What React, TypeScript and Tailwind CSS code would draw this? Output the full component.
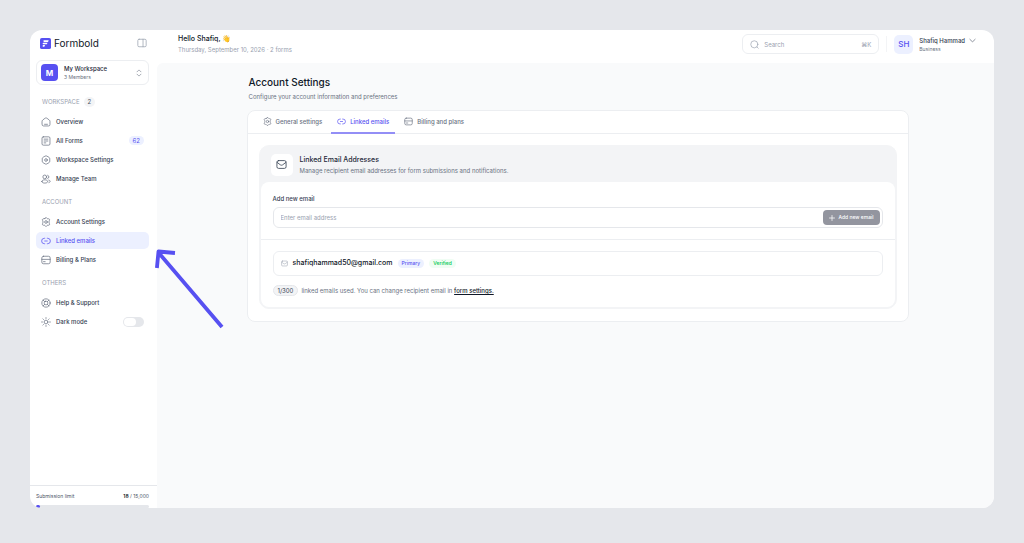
import React from "react";

type IconProps = { className?: string };

function Icon({ className = "size-[10px]", children }: { className?: string; children: React.ReactNode }) {
  return (
    <svg
      viewBox="0 0 24 24"
      fill="none"
      stroke="currentColor"
      strokeWidth="1.8"
      strokeLinecap="round"
      strokeLinejoin="round"
      className={`shrink-0 ${className}`}
      aria-hidden="true"
    >
      {children}
    </svg>
  );
}

const HomeIcon = ({ className }: IconProps) => (
  <Icon className={className}>
    <path d="M2.500 10.500c0-1.300.6-2.300 1.600-3.100l5.300-4.200c1.600-1.200 3.600-1.200 5.200 0l5.300 4.200c1 .8 1.600 1.800 1.600 3.100V18a3.500 3.500 0 0 1-3.500 3.500H6A3.500 3.500 0 0 1 2.500 18z" />
    <path d="M8.500 17.500h7" />
  </Icon>
);

const FormIcon = ({ className }: IconProps) => (
  <Icon className={className}>
    <rect x="2.500" y="2" width="19" height="20" rx="3" />
    <path d="M7.500 7.500h9M7.500 12h9M7.500 16.500h4" />
  </Icon>
);

const HexIcon = ({ className }: IconProps) => (
  <Icon className={className}>
    <path d="M10.200 2.500a3.600 3.600 0 0 1 3.600 0l5.400 3.100A3.600 3.600 0 0 1 21 8.700v6.600a3.600 3.600 0 0 1-1.800 3.100l-5.400 3.100a3.600 3.600 0 0 1-3.600 0l-5.400-3.100A3.600 3.600 0 0 1 3 15.300V8.700a3.600 3.600 0 0 1 1.800-3.100z" />
    <circle cx="12" cy="12" r="3.200" />
  </Icon>
);

const TeamIcon = ({ className }: IconProps) => (
  <Icon className={className}>
    <circle cx="9" cy="7" r="4.500" />
    <path d="M16 3a4.200 4.200 0 0 1 0 8M2 18c0-2.500 3-4 7-4s7 1.500 7 4-3 3.800-7 3.800S2 20.500 2 18zM18.500 14.500c2 .5 3.500 1.600 3.500 3.200 0 1.400-1.200 2.500-3 3" />
  </Icon>
);

const GearIcon = ({ className }: IconProps) => (
  <Icon className={className}>
    <path d="M9.700 3.100C10.300 2 11 1.500 12 1.500s1.700.5 2.300 1.600c.5.900 1.500 1.400 2.500 1.200l1-.1c1.100-.1 2 .3 2.600 1.300s.5 2-.2 2.900l-.6.800c-.6 1.700-.6 3.900 0 5.600l.6.800c.7.900.7 1.900.2 2.900s-1.500 1.400-2.600 1.300l-1-.1c-1-.2-2 .3-2.500 1.200-.6 1.100-1.300 1.600-2.300 1.600s-1.700-.5-2.300-1.600c-.5-.9-1.500-1.400-2.500-1.200l-1 .1c-1.100.1-2-.3-2.600-1.300s-.5-2 .2-2.900l.6-.8c.6-1.700.6-3.900 0-5.600l-.6-.8c-.7-.9-.7-1.900-.2-2.900s1.500-1.400 2.600-1.300l1 .1c1 .2 2-.3 2.500-1.200z" />
    <circle cx="12" cy="12" r="3.200" />
  </Icon>
);

const LinkIcon = ({ className }: IconProps) => (
  <Icon className={className}>
    <path d="M9 18.500H8a6.500 6.500 0 0 1 0-13h1M15 5.500h1a6.500 6.500 0 0 1 0 13h-1M9 12h6" />
  </Icon>
);

const CardIcon = ({ className }: IconProps) => (
  <Icon className={className}>
    <rect x="2" y="3" width="20" height="18" rx="4" />
    <path d="M2 10.500h20M6 16h4" />
  </Icon>
);

const HelpIcon = ({ className }: IconProps) => (
  <Icon className={className}>
    <circle cx="12" cy="12" r="10" />
    <rect x="8" y="8" width="8" height="8" rx="2.500" />
    <path d="M5 5l3.700 3.700M19 5l-3.700 3.700M5 19l3.700-3.700M19 19l-3.700-3.700" />
  </Icon>
);

const SunIcon = ({ className }: IconProps) => (
  <Icon className={className}>
    <circle cx="12" cy="12" r="4.500" />
    <path d="M12 1.500v2M12 20.500v2M1.500 12h2M20.500 12h2M4.600 4.600L6 6M18 18l1.400 1.400M4.600 19.400L6 18M18 6l1.400-1.400" />
  </Icon>
);

const MailIcon = ({ className }: IconProps) => (
  <Icon className={className}>
    <rect x="2" y="3.500" width="20" height="17" rx="3.500" />
    <path d="M2.500 7.500l7 5.200c1.500 1.100 3.500 1.100 5 0l7-5.200" />
  </Icon>
);

type Item = { label: string; icon: (p: IconProps) => React.ReactElement; active?: boolean; badge?: string };

function NavGroup({ title, count, items }: { title: string; count?: string; items: Item[] }) {
  return (
    <section>
      <h2 className="flex h-[11px] items-center gap-1 px-[6px] text-[6px] text-gray-400">
        {title}
        {count && (
          <span className="flex h-[10px] items-center rounded-full bg-gray-100 px-1 text-[6px] text-gray-600">{count}</span>
        )}
      </h2>
      <ul className="mt-[6px] flex flex-col gap-[2px]">
        {items.map(({ label, icon: I, active, badge }) => (
          <li key={label}>
            <a
              href="#"
              className={`flex h-[17px] items-center gap-[5px] rounded-[5px] px-[5px] text-[6px] font-medium ${
                active ? "bg-[#ecf0ff] text-[#5750f1]" : "text-gray-700"
              }`}
            >
              <I className={active ? "size-[10px]" : "size-[10px] text-gray-500"} />
              <span>{label}</span>
              {badge && (
                <span className="ml-auto rounded-full bg-[#ecf0ff] px-1 text-[6px] leading-[9px] font-normal text-[#5750f1]">{badge}</span>
              )}
            </a>
          </li>
        ))}
      </ul>
    </section>
  );
}

function Sidebar() {
  return (
    <aside className="flex w-[127px] shrink-0 flex-col justify-between">
      <div className="pt-[6px] pr-2 pl-[6px]">
        <div className="flex h-[14px] items-center justify-between pr-[2px] pl-1">
          <a href="#" className="flex items-center gap-[3px] text-[10px] leading-none text-gray-900">
            <svg viewBox="0 0 24 24" className="size-[11px]" aria-hidden="true">
              <rect width="24" height="24" rx="4" fill="#5750f1" />
              <path d="M8.500 5H19l-1.500 3.500H8.500A2 2 0 0 1 8.500 5zM7.500 10.300h9L15 13.800H7.500a1.750 1.750 0 0 1 0-3.500zM6 15.500h5L9.500 19H6z" fill="#fff" />
            </svg>
            Formbold
          </a>
          <button type="button" aria-label="Toggle sidebar" className="text-gray-400">
            <Icon>
              <rect x="2" y="3" width="20" height="18" rx="3" />
              <path d="M14.500 3v18" />
            </Icon>
          </button>
        </div>
        <button
          type="button"
          className="mt-[10px] flex h-[25px] w-full items-center gap-[6px] rounded-md border border-[#eceef1] pr-[5px] pl-[4px] text-left"
        >
          <span className="flex size-[17px] items-center justify-center rounded-[4px] bg-[#5750f1] text-[8px] font-bold text-white">M</span>
          <span className="flex-1">
            <span className="block text-[6px] leading-[9px] font-medium text-gray-800">My Workspace</span>
            <span className="block text-[5px] leading-[9px] text-gray-500">3 Members</span>
          </span>
          <Icon className="size-[8px] text-gray-500">
            <path d="M6 8.500l4.500-4.500a2.100 2.100 0 0 1 3 0L18 8.500M6 15.500l4.500 4.500a2.100 2.100 0 0 0 3 0l4.500-4.500" />
          </Icon>
        </button>
        <nav className="mt-[11px] flex flex-col gap-[9px]">
          <NavGroup
            title="WORKSPACE"
            count="2"
            items={[
              { label: "Overview", icon: HomeIcon },
              { label: "All Forms", icon: FormIcon, badge: "62" },
              { label: "Workspace Settings", icon: HexIcon },
              { label: "Manage Team", icon: TeamIcon },
            ]}
          />
          <NavGroup
            title="ACCOUNT"
            items={[
              { label: "Account Settings", icon: GearIcon },
              { label: "Linked emails", icon: LinkIcon, active: true },
              { label: "Billing & Plans", icon: CardIcon },
            ]}
          />
          <div>
            <NavGroup title="OTHERS" items={[{ label: "Help & Support", icon: HelpIcon }]} />
            <label className="mt-[2px] flex h-[17px] items-center gap-[5px] px-[5px] text-[6px] font-medium text-gray-700">
              <SunIcon className="size-[10px] text-gray-500" />
              Dark mode
              <input type="checkbox" role="switch" className="peer sr-only" />
              <span className="ml-auto flex h-[10px] w-[21px] rounded-full bg-gray-200 p-px peer-checked:justify-end">
                <span className="h-2 w-3 rounded-full bg-white" />
              </span>
            </label>
          </div>
        </nav>
      </div>
      <div className="border-t border-gray-200 pt-[6px] pr-2 pl-[6px]">
        <div className="flex justify-between text-[5px] leading-[9px] text-gray-600">
          <span>Submission limit</span>
          <span>
            <b className="font-semibold text-gray-900">18</b> / 15,000
          </span>
        </div>
        <div className="mt-1 h-[3px] rounded-full bg-gray-200">
          <div className="h-[3px] w-1 rounded-full bg-[#5750f1]" />
        </div>
      </div>
    </aside>
  );
}

function Header() {
  return (
    <header className="flex h-[33px] items-start justify-between pr-[18px] pl-[21px]">
      <div className="pt-1">
        <p className="text-[7px] leading-[10px] font-medium text-gray-900">Hello Shafiq, 👋</p>
        <p className="text-[6px] leading-[11px] text-gray-400">Thursday, September 10, 2026 · 2 forms</p>
      </div>
      <div className="flex items-center pt-1">
        <label className="flex h-[20px] w-[137px] items-center gap-[5px] rounded-md border border-[#eceef1] px-[7px] text-gray-400">
          <Icon className="size-[9px]">
            <circle cx="11.500" cy="11.500" r="9.500" />
            <path d="M18.500 18.500L22 22" />
          </Icon>
          <input
            type="search"
            aria-label="Search"
            placeholder="Search"
            className="min-w-0 flex-1 bg-transparent text-[6px] outline-none placeholder:text-gray-400"
          />
          <kbd className="font-[Inter] text-[6px]">⌘K</kbd>
        </label>
        <span className="mr-[7px] ml-[7px] h-4 w-px bg-gray-100" />
        <button type="button" className="flex items-center text-left">
          <span className="flex size-[19px] items-center justify-center rounded-[5px] bg-[#ecf0ff] text-[8px] font-medium text-[#5750f1]">
            SH
          </span>
          <span className="ml-[6px]">
            <span className="block text-[6px] leading-[9px] font-medium text-gray-700">Shafiq Hammad</span>
            <span className="block text-[5px] leading-2 text-gray-500">Business</span>
          </span>
          <Icon className="mb-2 ml-[4px] size-[7px] text-gray-500">
            <path d="M3 8l7.500 7.300a2.100 2.100 0 0 0 3 0L21 8" strokeWidth="2.600" />
          </Icon>
        </button>
      </div>
    </header>
  );
}

const tabs = [
  { label: "General settings", icon: GearIcon },
  { label: "Linked emails", icon: LinkIcon, active: true },
  { label: "Billing and plans", icon: CardIcon },
];

function Content() {
  return (
    <div className="mx-auto max-w-[662px] pt-3">
      <h1 className="pl-[2px] text-[10px] leading-[14px] font-medium text-gray-900">Account Settings</h1>
      <p className="mt-[2px] pl-[2px] text-[6px] leading-[11px] text-gray-500">Configure your account information and preferences</p>
      <div className="mt-2 rounded-lg border border-[#eceef1] bg-white">
        <div role="tablist" className="flex gap-[3px] border-b border-[#eceef1] px-[9px]">
          {tabs.map(({ label, icon: I, active }) => (
            <button
              key={label}
              type="button"
              role="tab"
              aria-selected={!!active}
              className={`-mb-px flex h-[23px] items-center gap-1 border-b-2 px-[6px] text-[6px] font-medium ${
                active ? "border-[#938ef6] text-[#5750f1]" : "border-transparent text-gray-500"
              }`}
            >
              <I className="size-[9px]" />
              {label}
            </button>
          ))}
        </div>
        <div className="mx-[11px] mt-[11px] mb-3 rounded-[10px] border border-gray-100 bg-gray-100 p-px">
          <div className="flex h-[35px] items-center gap-[7px] px-[10px]">
            <span className="flex size-[22px] items-center justify-center rounded-[5px] bg-white text-gray-700">
              <MailIcon className="size-[11px]" />
            </span>
            <div>
              <h2 className="text-[7px] leading-[11px] font-medium text-gray-800">Linked Email Addresses</h2>
              <p className="text-[6px] leading-[11px] text-gray-500">
                Manage recipient email addresses for form submissions and notifications.
              </p>
            </div>
          </div>
          <div className="rounded-lg bg-white">
            <form className="border-b border-[#eceef1] px-3 pt-3 pb-[11px]">
              <label htmlFor="email" className="block text-[6px] leading-[10px] font-medium text-gray-700">
                Add new email
              </label>
              <div className="mt-[3px] flex h-[21px] items-center rounded-md border border-gray-200 pr-[2px] pl-[7px]">
                <input
                  id="email"
                  type="email"
                  placeholder="Enter email address"
                  className="min-w-0 flex-1 bg-transparent text-[6px] outline-none placeholder:text-gray-400"
                />
                <button
                  type="button"
                  className="flex h-[15px] items-center gap-[3px] rounded-[4px] bg-[#93959f] px-[6px] text-[5px] font-medium text-white"
                >
                  <Icon className="size-[6px]">
                    <path d="M12 2v20M2 12h20" strokeWidth="3" />
                  </Icon>
                  Add new email
                </button>
              </div>
            </form>
            <div className="px-3 pt-[11px] pb-[11px]">
              <div className="flex h-[25px] items-center rounded-md border border-[#eceef1] px-[7px]">
                <MailIcon className="size-[7px] text-gray-400" />
                <span className="ml-[5px] text-[7px] font-medium text-gray-900">shafiqhammad50@gmail.com</span>
                <span className="ml-[5px] rounded-full bg-[#ecf0ff] px-1 text-[5px] leading-[9px] font-medium text-[#5750f1]">Primary</span>
                <span className="ml-[5px] rounded-full bg-green-50 px-1 text-[5px] leading-[9px] font-medium text-green-500">Verified</span>
              </div>
              <div className="mt-[9px] flex items-center gap-[3px] text-[6px] leading-[11px] text-gray-500">
                <span className="rounded-full border border-gray-200 bg-gray-100 px-1 text-[6px] leading-[9px] text-gray-700">1/300</span>
                <p>
                  linked emails used. You can change recipient email in{" "}
                  <a href="#" className="font-medium text-gray-900 underline">
                    form settings.
                  </a>
                </p>
              </div>
            </div>
          </div>
        </div>
      </div>
    </div>
  );
}

export default function App() {
  return (
    <div className="flex h-screen flex-col bg-[#e5e7eb] px-[30px] pt-[30px] pb-[35px] font-[Inter,sans-serif]">
      <div className="relative flex min-h-0 flex-1 overflow-hidden rounded-xl bg-white">
        <Sidebar />
        <div className="flex min-w-0 flex-1 flex-col">
          <Header />
          <main className="flex-1 rounded-tl-md bg-[#f9fafb] pl-1">
            <Content />
          </main>
        </div>
        <svg viewBox="0 0 70 82" className="absolute top-[218px] left-[125px] h-[82px] w-[70px]" fill="none" stroke="#5750f1" strokeWidth="3.800" aria-hidden="true">
          <path d="M67 79L3 4M20 5L3.500 3.500L1.900 20" strokeLinejoin="round" />
        </svg>
      </div>
    </div>
  );
}
